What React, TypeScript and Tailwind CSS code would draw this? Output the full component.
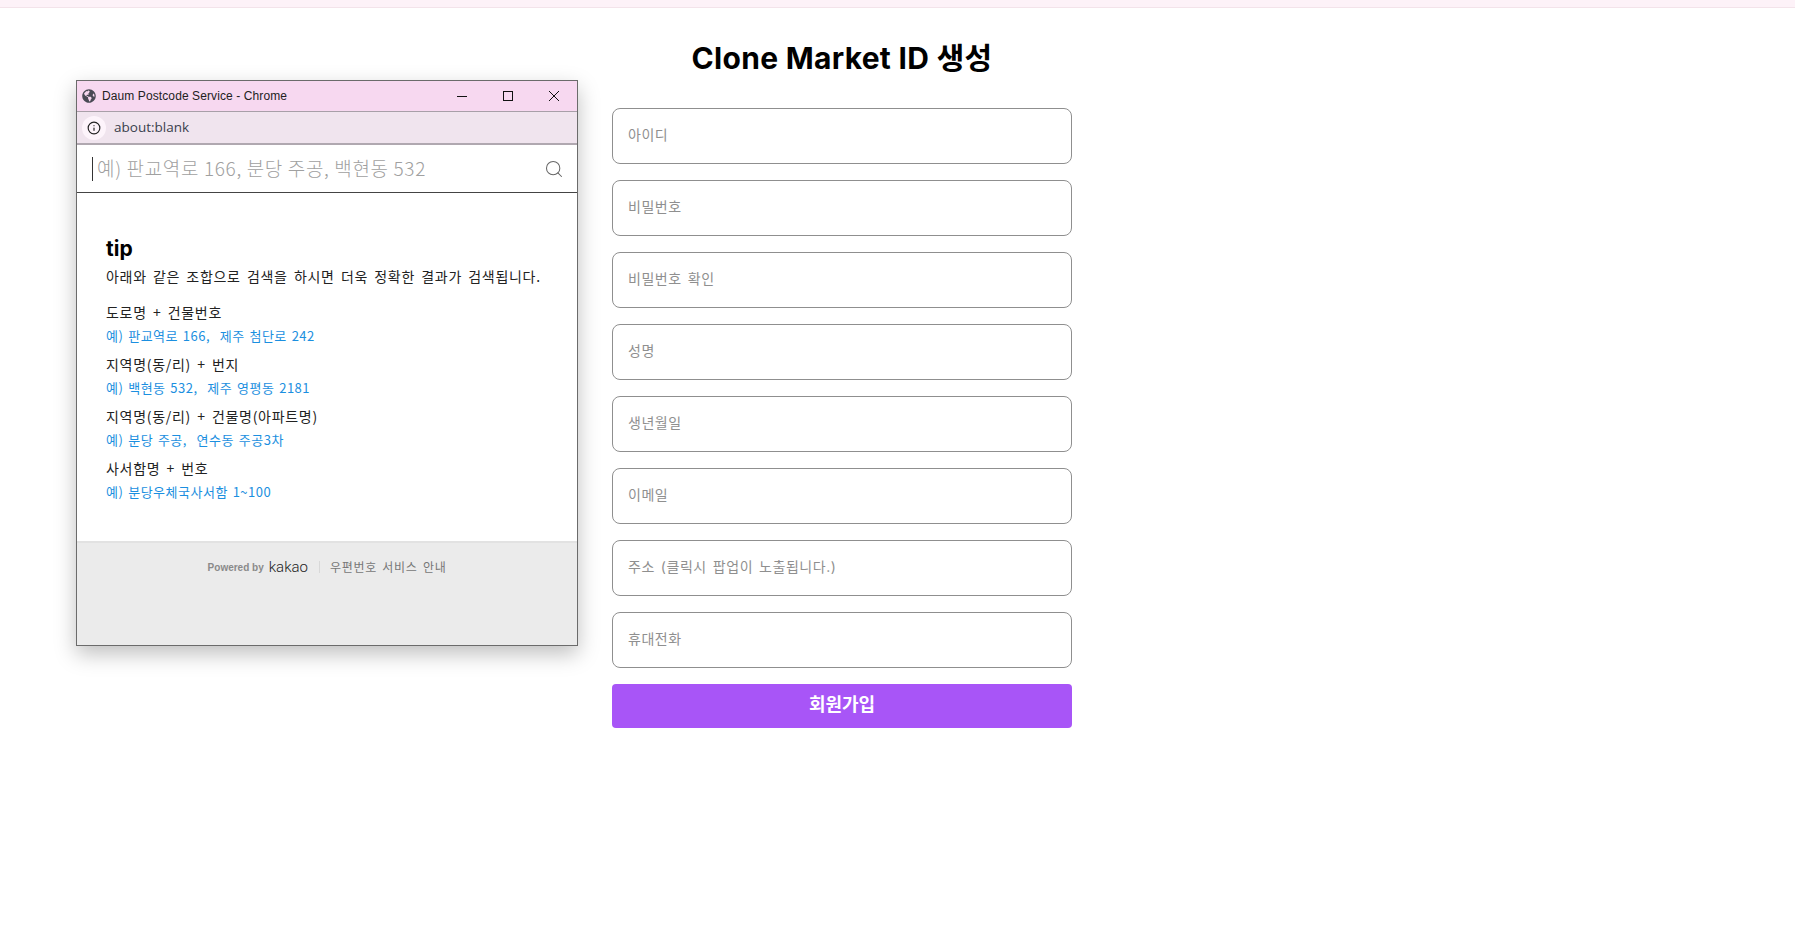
import { FaGlobeAmericas } from "react-icons/fa";
import { Info, Search } from "lucide-react";

const fields = [
  "아이디",
  "비밀번호",
  "비밀번호 확인",
  "성명",
  "생년월일",
  "이메일",
  "주소 (클릭시 팝업이 노출됩니다.)",
  "휴대전화",
];

const tips = [
  { title: "도로명 + 건물번호", example: "예) 판교역로 166,  제주 첨단로 242" },
  { title: "지역명(동/리) + 번지", example: "예) 백현동 532,  제주 영평동 2181" },
  { title: "지역명(동/리) + 건물명(아파트명)", example: "예) 분당 주공,  연수동 주공3차" },
  { title: "사서함명 + 번호", example: "예) 분당우체국사서함 1~100" },
];

function PostcodePopup() {
  return (
    <div className="absolute left-[76px] top-[80px] flex h-[566px] w-[502px] flex-col border border-[#6b6b6b] bg-white shadow-[0_8px_20px_rgba(0,0,0,0.25)]">
      {/* Title bar */}
      <div className="flex h-[31px] items-center border-b border-[#a89fa8] bg-[#f7d8f0] pl-[5px]">
        <FaGlobeAmericas className="h-[14px] w-[14px] text-[#4a4a55]" />
        <span className="ml-[6px] font-['Liberation_Sans','Noto_Sans_CJK_KR',sans-serif] text-[12px] tracking-[0.1px] text-[#222]">
          Daum Postcode Service - Chrome
        </span>
        <div className="ml-auto flex items-center">
          <svg width="46" height="30" viewBox="0 0 46 30" fill="none" stroke="#111">
            <path d="M18 15.5H28" />
          </svg>
          <svg width="46" height="30" viewBox="0 0 46 30" fill="none" stroke="#111">
            <rect x="18.5" y="10.5" width="9" height="9" />
          </svg>
          <svg width="46" height="30" viewBox="0 0 46 30" fill="none" stroke="#111">
            <path d="M18 10L28 20M28 10L18 20" />
          </svg>
        </div>
      </div>
      {/* Address bar */}
      <div className="flex h-[33px] items-center border-b-2 border-[#b0a8b0] bg-[#f0e4ee] pl-[5px]">
        <div className="flex h-[24px] w-[24px] items-center justify-center rounded-full bg-[#fdf4fb]">
          <Info className="h-[14px] w-[14px] text-[#222]" strokeWidth={2} />
        </div>
        <span className="ml-[8px] font-['Open_Sans',sans-serif] text-[13.5px] text-[#3a3f4c]">about:blank</span>
      </div>
      {/* Search */}
      <div className="flex h-[48px] items-center border-b border-[#444] pl-[15px] pr-[13px]">
        <div className="h-[24px] w-px bg-[#333]" />
        <span className="ml-[4px] font-['Noto_Sans_CJK_KR',sans-serif] text-[19px] font-light tracking-[0.65px] text-[#a0a0a0]">
          예) 판교역로 166, 분당 주공, 백현동 532
        </span>
        <Search className="ml-auto h-[20px] w-[20px] text-[#666]" strokeWidth={1.25} />
      </div>
      {/* Tips */}
      <div className="h-[348px] px-[29px] pt-[44px] font-['Noto_Sans_CJK_KR',sans-serif] text-[14px] tracking-[0.7px] text-[#222] [word-spacing:2.4px]">
        <h3 className="font-['Inter',sans-serif] text-[21px] font-bold leading-[23px] tracking-normal text-black">tip</h3>
        <p className="mt-[7px] leading-[19px]">아래와 같은 조합으로 검색을 하시면 더욱 정확한 결과가 검색됩니다.</p>
        <ul className="mt-[16px] flex flex-col gap-[8px]">
          {tips.map((tip) => (
            <li key={tip.title} className="flex flex-col">
              <span className="leading-[21px]">{tip.title}</span>
              <span className="mt-[3px] whitespace-pre text-[13px] leading-[20px] tracking-[0.5px] text-[#1b8fe0] [word-spacing:1.4px]">
                {tip.example}
              </span>
            </li>
          ))}
        </ul>
      </div>
      {/* Footer */}
      <div className="flex flex-1 justify-center border-t-2 border-[#e2e2e2] bg-[#ebebeb] pt-[13px]">
        <div className="flex h-[22px] items-center">
          <span className="font-['Liberation_Sans',sans-serif] text-[10px] font-bold text-[#8a8a8a]">Powered by</span>
          <span className="ml-[5px] font-['Roboto',sans-serif] text-[15px] font-light text-[#222]">kakao</span>
          <div className="ml-[11px] h-[12px] w-px bg-[#d8d8d8]" />
          <span className="ml-[10px] font-['Noto_Sans_CJK_KR',sans-serif] text-[12px] tracking-[0.7px] text-[#777] [word-spacing:2px]">
            우편번호 서비스 안내
          </span>
        </div>
      </div>
    </div>
  );
}

export default function App() {
  return (
    <div className="relative min-h-[925px] bg-white font-['Inter','Noto_Sans_CJK_KR',sans-serif]">
      <div className="h-[8px] border-b border-[#f3e3ea] bg-[#fdf2f8]" />
      <div className="ml-[612px] flex w-[460px] flex-col">
        <h1 className="mt-[32px] text-center text-[30px] font-bold leading-[36px] tracking-[0.3px] text-black">Clone Market ID 생성</h1>
        <form className="mt-[32px] flex flex-col gap-4">
          {fields.map((field) => (
            <input
              key={field}
              placeholder={field}
              className="h-[56px] w-full rounded-lg border border-[#8f8f8f] px-[15px] pb-[4px] text-[14px] tracking-[0.55px] text-black outline-none [word-spacing:1.5px] placeholder:text-[#8f8f8f]"
            />
          ))}
          <button type="button" className="h-[44px] rounded bg-[#a855f7] pb-[4px] text-[18px] font-bold text-white">
            회원가입
          </button>
        </form>
      </div>
      <PostcodePopup />
    </div>
  );
}
